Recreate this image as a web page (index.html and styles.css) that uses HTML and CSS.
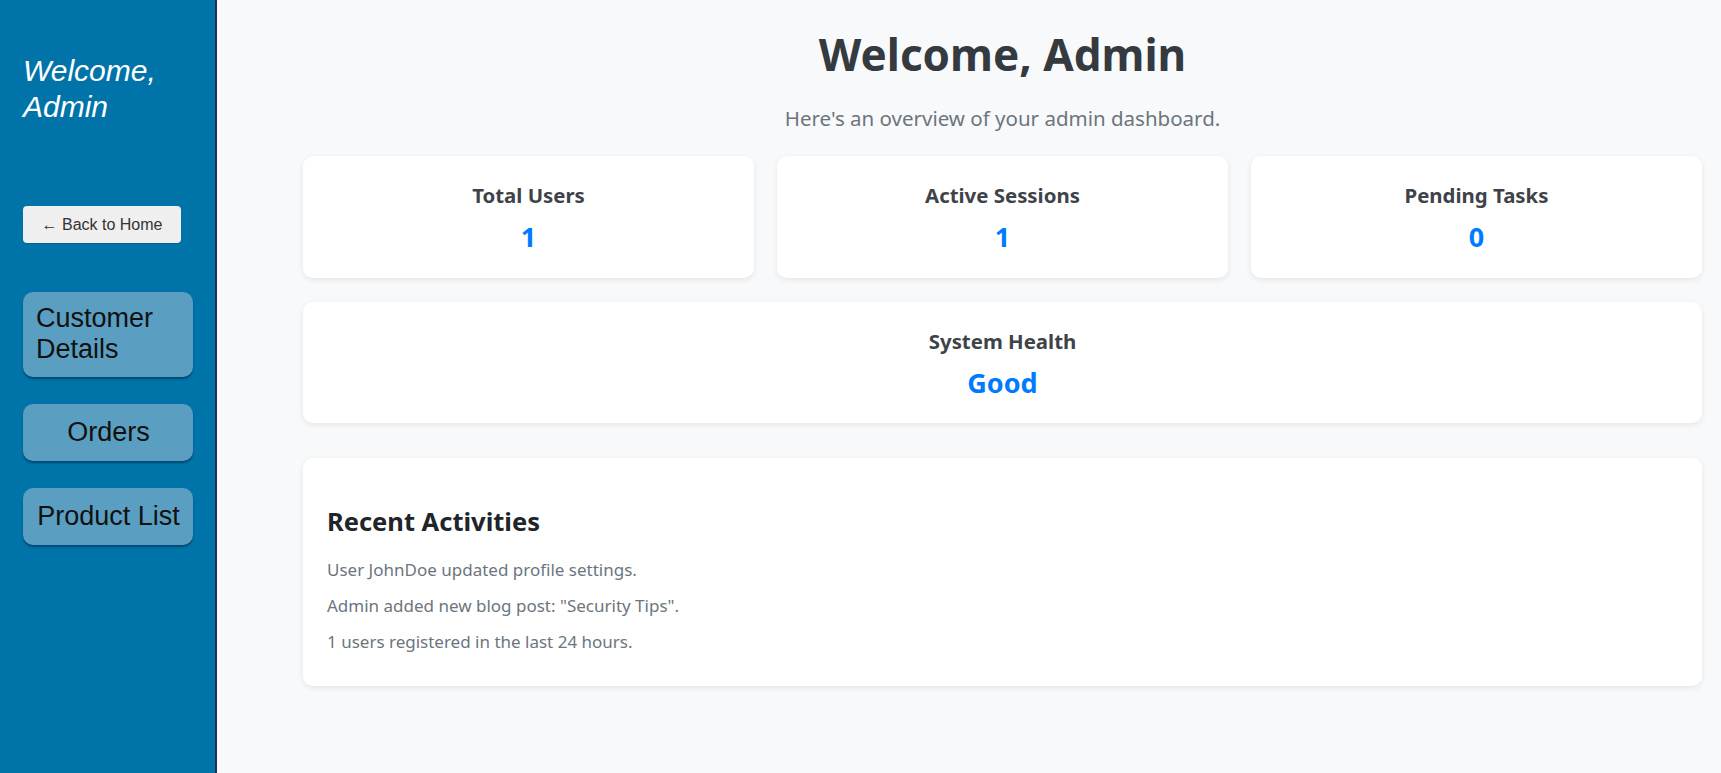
FILE: index.html
```html
<!DOCTYPE html>
<html lang="en">
<head>
<meta charset="utf-8">
<title>Admin Dashboard</title>
<link rel="stylesheet" href="styles.css">
</head>
<body>
<aside class="sidebar">
  <h2 class="sidebar-title">Welcome, Admin</h2>
  <button class="back-btn">&larr; Back to Home</button>
  <nav class="nav">
    <a class="nav-item nav-item-left" href="#">Customer Details</a>
    <a class="nav-item" href="#">Orders</a>
    <a class="nav-item" href="#">Product List</a>
  </nav>
</aside>
<main class="main">
  <header class="page-head">
    <h1 class="page-title">Welcome, Admin</h1>
    <p class="page-sub">Here's an overview of your admin dashboard.</p>
  </header>
  <section class="stats">
    <div class="card stat">
      <h3 class="stat-label">Total Users</h3>
      <div class="stat-value">1</div>
    </div>
    <div class="card stat">
      <h3 class="stat-label">Active Sessions</h3>
      <div class="stat-value">1</div>
    </div>
    <div class="card stat">
      <h3 class="stat-label">Pending Tasks</h3>
      <div class="stat-value">0</div>
    </div>
  </section>
  <section class="card stat health">
    <h3 class="stat-label">System Health</h3>
    <div class="stat-value">Good</div>
  </section>
  <section class="card activities">
    <h2 class="act-title">Recent Activities</h2>
    <p class="act-line">User JohnDoe updated profile settings.</p>
    <p class="act-line">Admin added new blog post: "Security Tips".</p>
    <p class="act-line">1 users registered in the last 24 hours.</p>
  </section>
</main>
</body>
</html>
```
FILE: styles.css
```css
* { box-sizing: border-box; }
html, body { height: 100%; }
body {
  margin: 0;
  display: flex;
  background: #f8f9fa;
  font-family: "Noto Sans", "Open Sans", sans-serif;
  color: #343a40;
}
.sidebar {
  width: 217px;
  flex: 0 0 217px;
  min-height: 100%;
  background: #0074a8;
  border-right: 2px solid #1d2f5c;
  padding: 53px 22px 0 23px;
  font-family: "Liberation Sans", Arial, sans-serif;
  display: flex;
  flex-direction: column;
  align-items: flex-start;
}
.sidebar-title {
  margin: 0;
  color: #fff;
  font-size: 30px;
  line-height: 36px;
  font-style: italic;
  font-weight: normal;
}
.back-btn {
  margin-top: 81px;
  width: 158px;
  height: 37px;
  border: none;
  border-radius: 4px;
  background: #efefef;
  color: #333;
  font-family: "Liberation Sans", Arial, sans-serif;
  font-size: 16px;
  box-shadow: 0 1px 1px rgba(0,0,0,0.15);
}
.nav {
  margin-top: 49px;
  display: flex;
  flex-direction: column;
  gap: 27px;
  width: 170px;
}
.nav-item {
  display: block;
  background: #5a9fc1;
  border-radius: 10px;
  padding: 13px 12px 13px 13px;
  color: #111;
  text-decoration: none;
  font-size: 27px;
  line-height: 31px;
  text-align: center;
  box-shadow: 0 2px 2px rgba(0, 20, 50, 0.45);
}
.nav-item-left {
  text-align: left;
  padding-top: 11px;
  padding-bottom: 12px;
}

.main {
  flex: 1;
  padding: 0 19px 40px 86px;
}
.page-head {
  text-align: center;
  padding-top: 26px;
}
.page-title {
  margin: 0;
  font-size: 44px;
  line-height: 56px;
  font-weight: 700;
  color: #343a40;
}
.page-sub {
  margin: 22px 0 0;
  font-size: 20.5px;
  line-height: 28px;
  color: #6c757d;
}
.stats {
  margin-top: 24px;
  display: grid;
  grid-template-columns: repeat(3, 1fr);
  gap: 23px;
}
.card {
  background: #fff;
  border-radius: 10px;
  box-shadow: 0 2px 6px rgba(0, 0, 0, 0.08);
}
.stat {
  height: 122px;
  display: flex;
  flex-direction: column;
  align-items: center;
  padding-top: 25px;
}
.stat-label {
  margin: 0;
  font-size: 20.4px;
  line-height: 28px;
  font-weight: 700;
  color: #3d4349;
}
.stat-value {
  margin-top: 11px;
  font-size: 27px;
  line-height: 34px;
  font-weight: 700;
  color: #007bff;
}
.health {
  margin-top: 24px;
  height: 121px;
}
.activities {
  margin-top: 35px;
  height: 228px;
  padding: 46px 24px 24px 24px;
}
.act-title {
  margin: 0 0 20px;
  font-size: 25.5px;
  line-height: 34px;
  font-weight: 700;
  color: #212529;
}
.act-line {
  margin: 0 0 12px;
  font-size: 17px;
  line-height: 24px;
  color: #6c757d;
}
```
